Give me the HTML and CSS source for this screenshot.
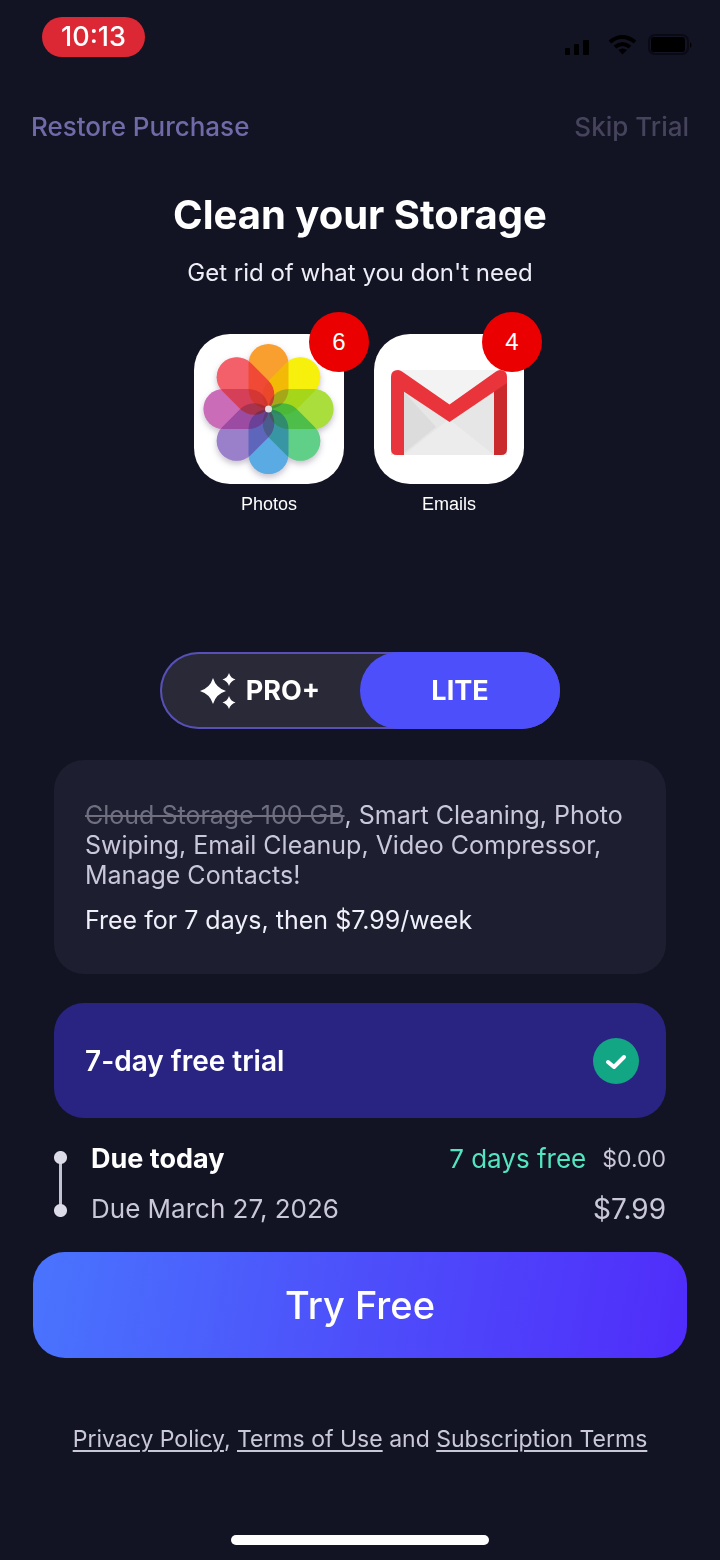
FILE: index.html
```html
<!DOCTYPE html>
<html lang="en">

<head>
    <meta charset="UTF-8">
    <meta name="viewport" content="width=device-width, initial-scale=1.0">
    <title>Clean your Storage</title>
    <link rel="stylesheet" href="styles.css">
</head>

<body>
    <!-- Status bar -->
    <div class="status-bar">
        <span class="clock">10:13</span>
        <svg class="status-icons" width="130" height="24" viewBox="0 0 130 24" aria-hidden="true">
            <rect x="3" y="15" width="5" height="7" rx="1" />
            <rect x="12" y="11" width="5" height="11" rx="1" />
            <rect x="21" y="7" width="6" height="15" rx="1" />
            <g fill="none" stroke="#000" stroke-width="4">
                <path d="M48 9 Q60 -1 73 9" />
                <path d="M53 14 Q60.500 8 68 14" />
            </g>
            <path d="M56.500 17 Q60.500 14 65 17 L60.500 21.500 Z" />
            <rect x="87" y="2" width="39" height="19" rx="6" fill="none" stroke="#090a14" stroke-width="2" />
            <rect x="89" y="4" width="34" height="15" rx="3" />
            <path d="M128 9 q3 3 0 6 Z" />
        </svg>
    </div>

    <nav class="top-nav">
        <button type="button" class="nav-btn restore">Restore Purchase</button>
        <button type="button" class="nav-btn skip">Skip Trial</button>
    </nav>

    <header class="heading">
        <h1>Clean your Storage</h1>
        <p>Get rid of what you don't need</p>
    </header>

    <!-- App icons -->
    <div class="apps">
        <div class="app">
            <div class="tile">
                <svg viewBox="0 0 150 150" aria-hidden="true">
                    <defs>
                        <rect id="petal" x="-20" y="-65" width="40" height="65" rx="20" />
                    </defs>
                    <g class="petals" transform="translate(74.500 75)">
                        <use href="#petal" fill="#f99f30" />
                        <use href="#petal" fill="#f6f00c" transform="rotate(45)" />
                        <use href="#petal" fill="#a9de3c" transform="rotate(90)" />
                        <use href="#petal" fill="#60cf88" transform="rotate(135)" />
                        <use href="#petal" fill="#5aaae4" transform="rotate(180)" />
                        <use href="#petal" fill="#9a80ca" transform="rotate(225)" />
                        <use href="#petal" fill="#cb6cb8" transform="rotate(270)" />
                        <use href="#petal" fill="#f4606a" transform="rotate(315)" />
                    </g>
                    <!-- second pass lightens the overlaps -->
                    <g opacity="0.4" transform="translate(74.500 75)">
                        <use href="#petal" fill="#f6f00c" transform="rotate(45)" />
                        <use href="#petal" fill="#a9de3c" transform="rotate(90)" />
                        <use href="#petal" fill="#60cf88" transform="rotate(135)" />
                        <use href="#petal" fill="#5aaae4" transform="rotate(180)" />
                        <use href="#petal" fill="#9a80ca" transform="rotate(225)" />
                        <use href="#petal" fill="#cb6cb8" transform="rotate(270)" />
                        <use href="#petal" fill="#f4606a" transform="rotate(315)" />
                    </g>
                    <circle cx="74.500" cy="75" r="3.500" fill="#e4dfe0" />
                </svg>
                <span class="badge badge-photos">6</span>
            </div>
            <span class="app-name">Photos</span>
        </div>
        <div class="app">
            <div class="tile">
                <svg viewBox="0 0 150 150" aria-hidden="true">
                    <path d="M24 36 H126 L133 42 V121 H17 V42 Z" fill="#e6e6e6" />
                    <path d="M30 121 L75 85 L120 121 Z" fill="#ececec" />
                    <path d="M30 58 L62 93 L30 119 Z" fill="#dcdcdc" />
                    <path d="M24 36 H126 L75 71 Z" fill="#f3f3f3" />
                    <path d="M17 43 H30 V121 H23 Q17 121 17 115 Z" fill="#e8343c" />
                    <path d="M120 43 H133 V115 Q133 121 127 121 H120 Z" fill="#cb2a2c" />
                    <path d="M17 43 Q17 36 24 36 Q26 36 28 37.500 L75.500 70.500 L122 37.500 Q124 36 126 36 Q133 36 133 43 V49 L75.500 88 L17 49 Z" fill="#ea343c" />
                </svg>
                <span class="badge badge-emails">4</span>
            </div>
            <span class="app-name">Emails</span>
        </div>
    </div>

    <!-- Plan switch -->
    <div class="plan-switch" role="radiogroup" aria-label="Plan">
        <label class="plan">
            <input type="radio" name="plan" value="pro">
            <svg width="36" height="36" viewBox="0 0 36 36" fill="#fff" aria-hidden="true">
                <path d="M13 5 Q16 15 26 18 Q16 21 13 31 Q10 21 0 18 Q10 15 13 5 Z" />
                <path d="M29 0 Q30.500 5 35.500 6.500 Q30.500 8 29 13 Q27.500 8 22.500 6.500 Q27.500 5 29 0 Z" />
                <path d="M29 23 Q30.500 28 35.500 29.500 Q30.500 31 29 36 Q27.500 31 22.500 29.500 Q27.500 28 29 23 Z" />
            </svg>
            PRO+
        </label>
        <label class="plan">
            <input type="radio" name="plan" value="lite" checked>
            LITE
        </label>
    </div>

    <main class="content">
        <section class="features">
            <p class="feature-list"><s>Cloud Storage 100 GB</s>, Smart Cleaning, Photo Swiping, Email Cleanup, Video Compressor, Manage Contacts!</p>
            <p class="price">Free for 7 days, then $7.99/week</p>
        </section>

        <label class="trial">
            7-day free trial
            <span class="check">
                <input type="checkbox" name="trial" checked>
                <svg viewBox="0 0 46 46" aria-hidden="true">
                    <path d="M15 24 L21 29 L31 19" />
                </svg>
            </span>
        </label>

        <!-- Payment schedule -->
        <div class="schedule">
            <div class="timeline"></div>
            <div class="due-list">
                <div class="due">
                    <strong>Due today</strong>
                    <span class="free">7 days free</span>
                    <span class="zero">$0.00</span>
                </div>
                <div class="due">
                    <span>Due March 27, 2026</span>
                    <span class="amount">$7.99</span>
                </div>
            </div>
        </div>
    </main>

    <button type="button" class="try-btn">Try Free</button>

    <footer class="legal">
        <a href="#">Privacy Policy</a>, <a href="#">Terms of Use</a> and <a href="#">Subscription Terms</a>
    </footer>
    <div class="home-bar"></div>
</body>

</html>
```
FILE: styles.css
```css
* {
    box-sizing: border-box;
}

body {
    margin: 0;
    min-height: 100vh;
    display: flex;
    flex-direction: column;
    background-color: #121323;
    color: #fff;
    font-family: Inter, "Liberation Sans", sans-serif;
}

h1,
p {
    margin: 0;
}

button {
    border: none;
    padding: 0;
    background: none;
    font-family: inherit;
    cursor: pointer;
}

/* Status bar */
.status-bar {
    display: flex;
    justify-content: space-between;
    padding: 17px 28px 0 42px;
}

.clock {
    padding: 0 19px;
    border-radius: 20px;
    background: #dc2734;
    font-size: 27px;
    font-weight: 500;
    line-height: 40px;
}

.status-icons {
    margin-top: 16px;
}

.top-nav {
    display: flex;
    justify-content: space-between;
    padding: 0 31px;
    margin-top: 54px;
}

.nav-btn {
    font-size: 26px;
    font-weight: 500;
    line-height: 32px;
}

.restore {
    color: #706ba8;
}

.skip {
    color: #45445c;
}

/* Heading */
.heading {
    margin-top: 46px;
    text-align: center;
}

.heading h1 {
    font-size: 40px;
    font-weight: 700;
    line-height: 52px;
}

.heading p {
    margin-top: 16px;
    color: #eeeef8;
    font-size: 24px;
    line-height: 32px;
}

/* App icons */
.apps {
    display: flex;
    justify-content: center;
    gap: 30px;
    margin-top: 45px;
    padding-right: 2px;
}

.app {
    display: flex;
    flex-direction: column;
    align-items: center;
    gap: 8px;
}

.tile {
    position: relative;
    width: 150px;
    height: 150px;
    border-radius: 36px;
    background: #fff;
}

.tile svg {
    display: block;
}

.petals {
    filter: drop-shadow(0 3px 3px rgba(60, 40, 80, 0.3));
}

.petals use {
    mix-blend-mode: multiply;
}

.badge {
    position: absolute;
    top: -22px;
    width: 60px;
    border-radius: 50%;
    background: #ea0000;
    font-family: "Liberation Sans", sans-serif;
    font-size: 24px;
    line-height: 60px;
    text-align: center;
}

.badge-photos {
    right: -25px;
}

.badge-emails {
    right: -18px;
}

.app-name {
    font-family: "Liberation Sans", sans-serif;
    font-size: 18px;
    line-height: 24px;
}

/* Plan switch */
.plan-switch {
    display: flex;
    align-self: center;
    width: 400px;
    height: 77px;
    margin-top: 136px;
    border-radius: 39px;
    background: #2a2938;
    box-shadow: inset 0 0 0 2px #5650b8;
}

.plan {
    flex: 1;
    display: flex;
    align-items: center;
    justify-content: center;
    gap: 10px;
    border-radius: 39px;
    font-size: 27px;
    font-weight: 700;
    cursor: pointer;
}

.plan:has(input:checked) {
    background: #4d4ffb;
}

.plan input {
    position: absolute;
    appearance: none;
    margin: 0;
}

/* Cards */
.content {
    padding: 0 54px;
    margin-top: 31px;
}

.features {
    padding: 40px 31px 39px;
    border-radius: 30px;
    background: #1d1e30;
    font-size: 25px;
    line-height: 30px;
}

.feature-list {
    color: #c9c8da;
}

.feature-list s {
    color: #706f80;
}

.price {
    margin-top: 15px;
    color: #f0f0fa;
}

.trial {
    display: flex;
    align-items: center;
    justify-content: space-between;
    height: 115px;
    margin-top: 29px;
    padding: 0 27px 0 31px;
    border-radius: 30px;
    background: #292481;
    font-size: 28px;
    font-weight: 600;
    cursor: pointer;
}

.check {
    display: grid;
    width: 46px;
    height: 46px;
}

.check input,
.check svg {
    grid-area: 1 / 1;
    width: 100%;
    height: 100%;
    margin: 0;
}

.check input {
    appearance: none;
    border-radius: 50%;
    background: #3a3690;
}

.check input:checked {
    background: #13a685;
}

.check svg {
    fill: none;
    stroke: #fff;
    stroke-width: 4;
    stroke-linecap: round;
    stroke-linejoin: round;
    pointer-events: none;
}

/* Payment schedule */
.schedule {
    display: flex;
    align-items: center;
    gap: 24px;
    margin-top: 16px;
}

/* Two dots joined by a line */
.timeline {
    width: 13px;
    height: 66px;
    background:
        radial-gradient(circle at center, #dcdbe8 6px, transparent 7px) top / 13px 13px no-repeat,
        radial-gradient(circle at center, #dcdbe8 6px, transparent 7px) bottom / 13px 13px no-repeat,
        linear-gradient(#c4c3d2, #c4c3d2) center / 3px 50px no-repeat;
}

.due-list {
    flex: 1;
    color: #c9c8d8;
    font-size: 26px;
}

.due {
    display: flex;
    align-items: center;
    line-height: 50px;
}

.due strong {
    color: #fff;
    font-size: 27px;
    font-weight: 700;
}

.free {
    margin-left: auto;
    color: #52e5c0;
}

.zero {
    margin-left: 16px;
    font-size: 23px;
}

.amount {
    margin-left: auto;
    font-size: 28px;
}

.try-btn {
    height: 106px;
    margin: 18px 33px 0;
    border-radius: 32px;
    background: linear-gradient(100deg, #4974fe, #4d4ffa 50%, #502cfa);
    color: #fff;
    font-size: 38px;
    font-weight: 500;
}

.legal {
    margin-top: 66px;
    color: #c9c8d8;
    font-size: 23px;
    line-height: 30px;
    text-align: center;
}

.legal a {
    color: inherit;
    text-underline-offset: 3px;
    text-decoration-thickness: 2px;
}

.home-bar {
    align-self: center;
    width: 258px;
    height: 10px;
    margin: auto 0 15px;
    border-radius: 5px;
    background: #fff;
}
```
